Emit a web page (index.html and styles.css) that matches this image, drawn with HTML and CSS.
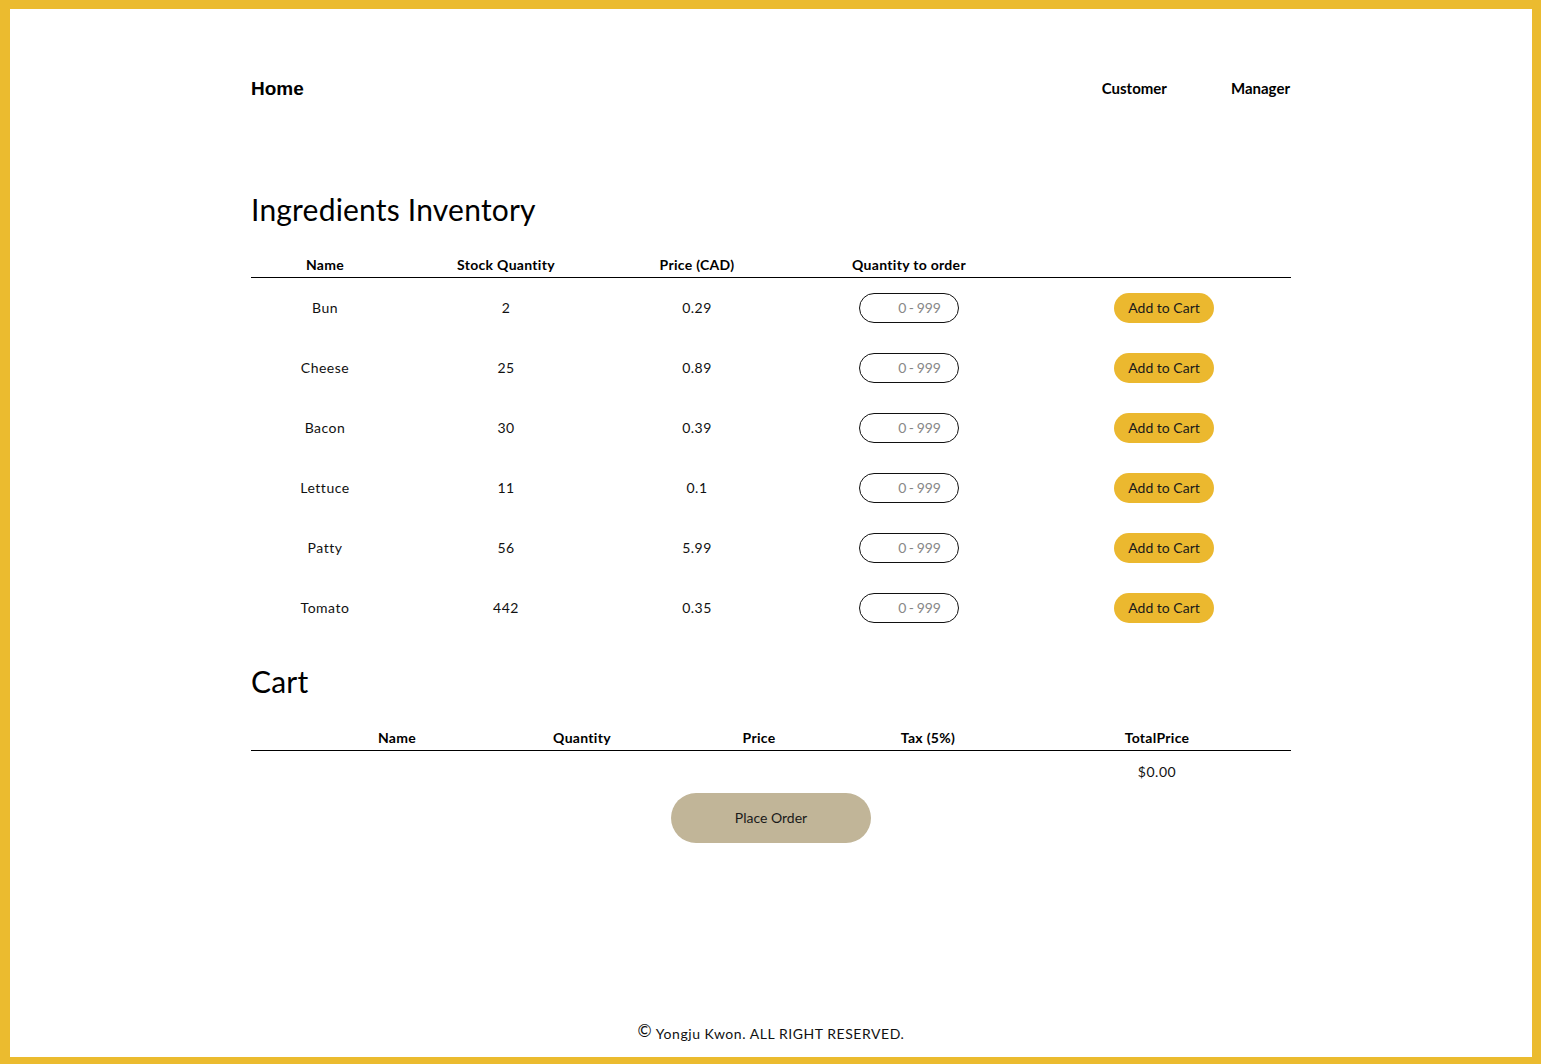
FILE: index.html
```html
<!DOCTYPE html>
<html lang="en">
<head>
<meta charset="utf-8">
<title>Ingredients Inventory</title>
<link rel="stylesheet" href="styles.css">
</head>
<body>
<div class="frame">
  <div class="container">
    <nav class="nav">
      <a class="home" href="#">Home</a>
      <div class="links">
        <a href="#">Customer</a>
        <a href="#">Manager</a>
      </div>
    </nav>

    <h2 class="title inv-title">Ingredients Inventory</h2>
    <table class="inv">
      <colgroup>
        <col class="c1"><col class="c2"><col class="c3"><col class="c4"><col class="c5">
      </colgroup>
      <thead>
        <tr><th>Name</th><th>Stock Quantity</th><th>Price (CAD)</th><th>Quantity to order</th><th></th></tr>
      </thead>
      <tbody>
        <tr><td>Bun</td><td>2</td><td>0.29</td><td><input class="qty" type="text" placeholder="0 - 999"></td><td><button class="add">Add to Cart</button></td></tr>
        <tr><td>Cheese</td><td>25</td><td>0.89</td><td><input class="qty" type="text" placeholder="0 - 999"></td><td><button class="add">Add to Cart</button></td></tr>
        <tr><td>Bacon</td><td>30</td><td>0.39</td><td><input class="qty" type="text" placeholder="0 - 999"></td><td><button class="add">Add to Cart</button></td></tr>
        <tr><td>Lettuce</td><td>11</td><td>0.1</td><td><input class="qty" type="text" placeholder="0 - 999"></td><td><button class="add">Add to Cart</button></td></tr>
        <tr><td>Patty</td><td>56</td><td>5.99</td><td><input class="qty" type="text" placeholder="0 - 999"></td><td><button class="add">Add to Cart</button></td></tr>
        <tr><td>Tomato</td><td>442</td><td>0.35</td><td><input class="qty" type="text" placeholder="0 - 999"></td><td><button class="add">Add to Cart</button></td></tr>
      </tbody>
    </table>

    <h2 class="title cart-title">Cart</h2>
    <table class="cart">
      <colgroup>
        <col class="k1"><col class="k2"><col class="k3"><col class="k4"><col class="k5">
      </colgroup>
      <thead>
        <tr><th>Name</th><th>Quantity</th><th>Price</th><th>Tax (5%)</th><th class="total">TotalPrice</th></tr>
      </thead>
      <tbody>
        <tr><td></td><td></td><td></td><td></td><td class="total">$0.00</td></tr>
      </tbody>
    </table>
    <div class="order-wrap">
      <button class="order">Place Order</button>
    </div>
  </div>

  <footer class="footer"><span class="copy">©</span> Yongju Kwon. ALL RIGHT RESERVED.</footer>
</div>
</body>
</html>
```

FILE: styles.css
```css
* { box-sizing: border-box; }

html, body {
  margin: 0;
  padding: 0;
}

body {
  font-family: "Lato", "Open Sans", sans-serif;
  color: #111;
  background: #fff;
}

.frame {
  min-height: 100vh;
  border-style: solid;
  border-color: #ebbb2f;
  border-width: 9px 9px 7px 10px;
  display: flex;
  flex-direction: column;
}

.container {
  width: 1040px;
  margin: 0 auto;
}

.nav {
  display: flex;
  justify-content: space-between;
  align-items: center;
  padding-top: 67px;
  height: 91px;
}

.nav a {
  color: #000;
  text-decoration: none;
}

.home {
  font-family: "Liberation Sans", Arial, sans-serif;
  font-weight: 700;
  font-size: 19px;
  line-height: 24px;
  position: relative;
  top: 1px;
}

.links {
  display: flex;
  gap: 64px;
}

.links a {
  font-weight: 700;
  font-size: 15px;
  line-height: 24px;
}

.links a:last-child { margin-right: 1px; }

.title {
  font-weight: 400;
  font-size: 30px;
  line-height: 36px;
  letter-spacing: 0.2px;
  margin: 0;
  color: #000;
}

.inv-title { margin-top: 91px; }
.cart-title { margin-top: 25px; }

table {
  width: 1040px;
  border-collapse: collapse;
  table-layout: fixed;
}

th {
  font-weight: 700;
  font-size: 14px;
  line-height: 20px;
  letter-spacing: 0.3px;
  padding: 0 0 2px;
  border-bottom: 1px solid #000;
  text-align: center;
  color: #000;
}

td {
  font-size: 14px;
  line-height: 20px;
  letter-spacing: 0.5px;
  text-align: center;
  vertical-align: middle;
  padding: 0;
  color: #111;
}

.inv { margin-top: 28px; }
.inv tbody tr { height: 60px; }

.c1 { width: 148px; }
.c2 { width: 214px; }
.c3 { width: 168px; }
.c4 { width: 256px; }
.c5 { width: 254px; }

.qty {
  width: 100px;
  height: 30px;
  border: 1px solid #111;
  border-radius: 15px;
  padding: 0 17px 0 0;
  text-align: right;
  font-family: "Lato", sans-serif;
  font-size: 14px;
  letter-spacing: 0;
  word-spacing: -1px;
  background: #fff;
  outline: none;
  display: block;
  margin: 0 auto;
}

.qty::placeholder { color: #888; }

.add {
  width: 100px;
  height: 30px;
  border: none;
  border-radius: 15px;
  background: #ebb82f;
  font-family: "Lato", sans-serif;
  font-size: 14px;
  color: #1a1a1a;
  padding: 0;
  display: block;
  margin: 0 auto;
  cursor: pointer;
}

.cart { margin-top: 29px; }
.cart td { padding: 11px 0 9px; }

.k1 { width: 292px; }
.k2 { width: 78px; }
.k3 { width: 276px; }
.k4 { width: 62px; }
.k5 { width: 332px; }

.cart .total { padding-left: 64px; }

.order-wrap {
  display: flex;
  justify-content: center;
  margin-top: 2px;
}

.order {
  width: 200px;
  height: 50px;
  border: none;
  border-radius: 25px;
  background: #c1b598;
  font-family: "Lato", sans-serif;
  font-size: 14px;
  color: #1a1a1a;
  cursor: pointer;
}

.footer {
  margin-top: auto;
  text-align: center;
  font-size: 14px;
  line-height: 20px;
  letter-spacing: 0.55px;
  padding-bottom: 13px;
  color: #111;
}

.copy {
  font-size: 17px;
  position: relative;
  top: -2px;
}
```
